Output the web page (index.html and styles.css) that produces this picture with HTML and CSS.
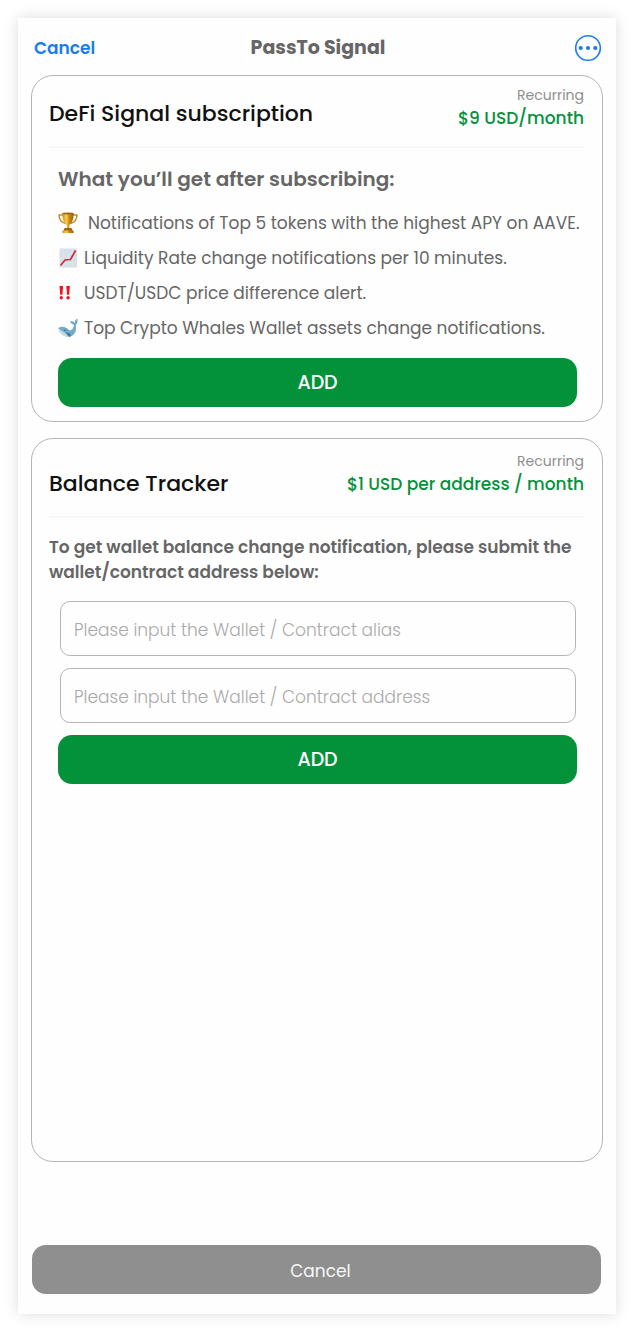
FILE: index.html
```html
<!DOCTYPE html>
<html lang="en">
<head>
    <meta charset="UTF-8">
    <meta name="viewport" content="width=device-width, initial-scale=1.0">
    <title>PassTo Signal</title>
    <link rel="stylesheet" href="styles.css">
</head>
<body>
    <div class="panel">
        <!-- Header -->
        <header>
            <button type="button" class="link-btn">Cancel</button>
            <h1>PassTo Signal</h1>
            <button type="button" class="more-btn" aria-label="More options">
                <svg width="28" height="28" viewBox="0 0 28 28">
                    <circle cx="14" cy="14" r="12.3" fill="none" stroke="#1a7cec" stroke-width="1.6"/>
                    <circle cx="6.7" cy="14" r="2.1" fill="#1a7cec"/>
                    <circle cx="14" cy="14" r="2.1" fill="#1a7cec"/>
                    <circle cx="21.3" cy="14" r="2.1" fill="#1a7cec"/>
                </svg>
            </button>
        </header>

        <!-- DeFi Signal -->
        <section class="card signal">
            <div class="card-head">
                <h2>DeFi Signal subscription</h2>
                <div class="price">
                    <span class="period">Recurring</span>
                    <span class="amount">$9 USD/month</span>
                </div>
            </div>
            <div class="card-body">
                <h3>What you’ll get after subscribing:</h3>
                <ul class="benefits">
                    <li class="first">
                        <svg width="20" height="22" viewBox="0 0 20 22">
                            <defs>
                                <linearGradient id="gold" x1="0" x2="1" y1="0" y2="0">
                                    <stop offset="0" stop-color="#c98a16"/>
                                    <stop offset="0.35" stop-color="#f8cf55"/>
                                    <stop offset="0.6" stop-color="#d0890f"/>
                                    <stop offset="1" stop-color="#9a5c08"/>
                                </linearGradient>
                            </defs>
                            <path d="M5 3H1C1 7 2.500 10 7.500 11.500M15 3H19C19 7 17.500 10 12.500 11.500" fill="none" stroke="#c78a20" stroke-width="1.4"/>
                            <path d="M4.300 1.200H15.700C15.500 7.500 14 11.500 11.300 13V16.500H8.700V13C6 11.500 4.500 7.500 4.300 1.200Z" fill="url(#gold)"/>
                            <ellipse cx="10" cy="1.500" rx="5.700" ry="0.900" fill="#9c690f"/>
                            <path d="M6.500 16H13.500L14.500 19H5.500Z" fill="#a3620b"/>
                            <path d="M4.500 18.500H15.500V21H4.500Z" fill="url(#gold)"/>
                        </svg>
                        <span>Notifications of Top 5 tokens with the highest APY on AAVE.</span>
                    </li>
                    <li>
                        <svg width="20" height="22" viewBox="0 0 20 22">
                            <rect x="1.500" y="1.500" width="17.500" height="19" fill="#d5e0e9"/>
                            <path d="M1.500 6H19M1.500 11H19M1.500 16H19M5.500 1.500V20.500M10 1.500V20.500M14.500 1.500V20.500" stroke="#dde6ed" stroke-width="0.800"/>
                            <path d="M2.500 18.500L7 13L12.500 12.500L17.500 3.500" fill="none" stroke="#d62839" stroke-width="1.700" stroke-linejoin="round"/>
                        </svg>
                        <span>Liquidity Rate change notifications per 10 minutes.</span>
                    </li>
                    <li>
                        <svg width="20" height="22" viewBox="0 0 20 22">
                            <path d="M1.500 4H5.100L4.400 12.800H2.200ZM8.300 4H11.900L11.200 12.800H9Z" fill="#f5121d"/>
                            <circle cx="3.300" cy="15.800" r="1.700" fill="#f5121d"/>
                            <circle cx="10.100" cy="15.800" r="1.700" fill="#f5121d"/>
                        </svg>
                        <span>USDT/USDC price difference alert.</span>
                    </li>
                    <li>
                        <svg width="20" height="22" viewBox="0 0 20 22">
                            <path d="M0.500 11C3 9 8 9.500 11 13C13.500 14 15.500 11.500 16 8C14.500 7 12.500 6.500 12 4.500C14 4 16 4.500 16.800 6C16.800 4 17.800 2 19.300 1.500C20 4 19.500 6.500 17.800 8.200C19 13 17 18.500 12 19.500C7 20.500 1 16.500 0.500 11Z" fill="#76abc6"/>
                            <path d="M0.500 11.500C3.500 13.500 6 15.500 11.500 19.500C7 20.500 1 17 0.500 11.500Z" fill="#c4dce7"/>
                            <path d="M8 15C9 18 10 19.500 12.500 20L12.500 17Z" fill="#397b9e"/>
                            <circle cx="7" cy="13.200" r="0.700" fill="#234c63"/>
                        </svg>
                        <span>Top Crypto Whales Wallet assets change notifications.</span>
                    </li>
                </ul>
                <button type="button" class="add-btn">ADD</button>
            </div>
        </section>

        <!-- Balance Tracker -->
        <section class="card tracker">
            <div class="card-head">
                <h2>Balance Tracker</h2>
                <div class="price">
                    <span class="period">Recurring</span>
                    <span class="amount">$1 USD per address / month</span>
                </div>
            </div>
            <form class="card-body">
                <p>To get wallet balance change notification, please submit the wallet/contract address below:</p>
                <input type="text" name="alias" aria-label="Wallet / Contract alias" placeholder="Please input the Wallet / Contract alias">
                <input type="text" name="address" aria-label="Wallet / Contract address" placeholder="Please input the Wallet / Contract address">
                <button type="button" class="add-btn">ADD</button>
            </form>
        </section>

        <!-- Footer -->
        <footer>
            <button type="button" class="cancel-btn">Cancel</button>
        </footer>
    </div>
</body>
</html>
```
FILE: styles.css
```css
/* General Styles */
* {
    box-sizing: border-box;
}

body {
    margin: 0;
    padding: 18px 18px 19px;
    background-color: #fff;
    color: #666;
    font-family: Poppins, Inter, sans-serif;
}

h1, h2, h3, p, ul {
    margin: 0;
    padding: 0;
}

button, input {
    font-family: inherit;
}

button {
    border: none;
    cursor: pointer;
}

.panel {
    display: flex;
    flex-direction: column;
    min-height: calc(100vh - 37px);
    padding: 0 13px 20px;
    background-color: #fefefe;
    box-shadow: 0 0 14px rgba(0, 0, 0, 0.14);
}

/* Header Styles */
header {
    display: grid;
    grid-template-columns: 1fr auto 1fr;
    align-items: center;
    height: 57px;
    padding: 2px 1px 0 3px;
}

header h1 {
    font-size: 19px;
    font-weight: 700;
}

.link-btn {
    justify-self: start;
    padding: 0;
    background: none;
    color: #1a7cec;
    font-size: 17px;
    font-weight: 600;
}

.more-btn {
    display: flex;
    justify-self: end;
    padding: 0;
    background: none;
}

/* Card Styles */
.card {
    border: 1px solid #b5b5b5;
    border-radius: 22px;
}

.card-head {
    display: flex;
    justify-content: space-between;
    align-items: flex-end;
    margin: 0 18px 0 17px;
    padding: 8px 0 16px;
    border-bottom: 2px solid #f6f6f6;
}

.card-head h2 {
    color: #111;
    font-size: 22px;
    font-weight: 500;
    line-height: 32px;
}

.price {
    display: flex;
    flex-direction: column;
    text-align: right;
    line-height: 23px;
}

.period {
    color: #8e8e8e;
    font-size: 14px;
}

.amount {
    color: #03923a;
    font-size: 17px;
    font-weight: 500;
}

.card-body {
    padding: 16px 25px 14px 26px;
}

.card-body h3 {
    font-size: 20px;
    font-weight: 600;
    line-height: 30px;
}

.benefits {
    margin: 11px 0 13px;
    list-style: none;
}

.benefits li {
    display: flex;
    align-items: center;
    gap: 6px;
    height: 35px;
    font-size: 17px;
    white-space: nowrap;
}

.benefits svg {
    flex-shrink: 0;
}

.benefits .first {
    gap: 10px;
}

.add-btn {
    display: block;
    width: 100%;
    height: 49px;
    border-radius: 14px;
    background-color: #03923a;
    color: #fff;
    font-size: 19px;
    font-weight: 500;
}

/* Balance Tracker */
.tracker {
    flex: 1;
    margin-top: 16px;
}

.tracker .card-head {
    padding: 11px 0 20px;
}

.tracker h2 {
    line-height: 24px;
}

.tracker .card-body {
    padding-top: 17px;
}

.tracker p {
    margin: 0 0 16px -9px;
    font-size: 17px;
    font-weight: 600;
    line-height: 25px;
}

.tracker input {
    display: block;
    width: calc(100% - 3px);
    height: 55px;
    margin: 0 1px 12px 2px;
    padding: 2px 13px 0;
    border: 1px solid #b5b5b5;
    border-radius: 10px;
    background-color: #fefefe;
    font-size: 17px;
    font-weight: 300;
}

.tracker input::placeholder {
    color: #aaa;
    opacity: 1;
}

/* Footer Styles */
footer {
    margin-top: 83px;
    padding: 0 2px 0 1px;
}

.cancel-btn {
    width: 100%;
    height: 49px;
    padding: 2px 0 0 8px;
    border-radius: 14px;
    background-color: #8f8f8f;
    color: #f8f8f8;
    font-size: 17px;
}
```
